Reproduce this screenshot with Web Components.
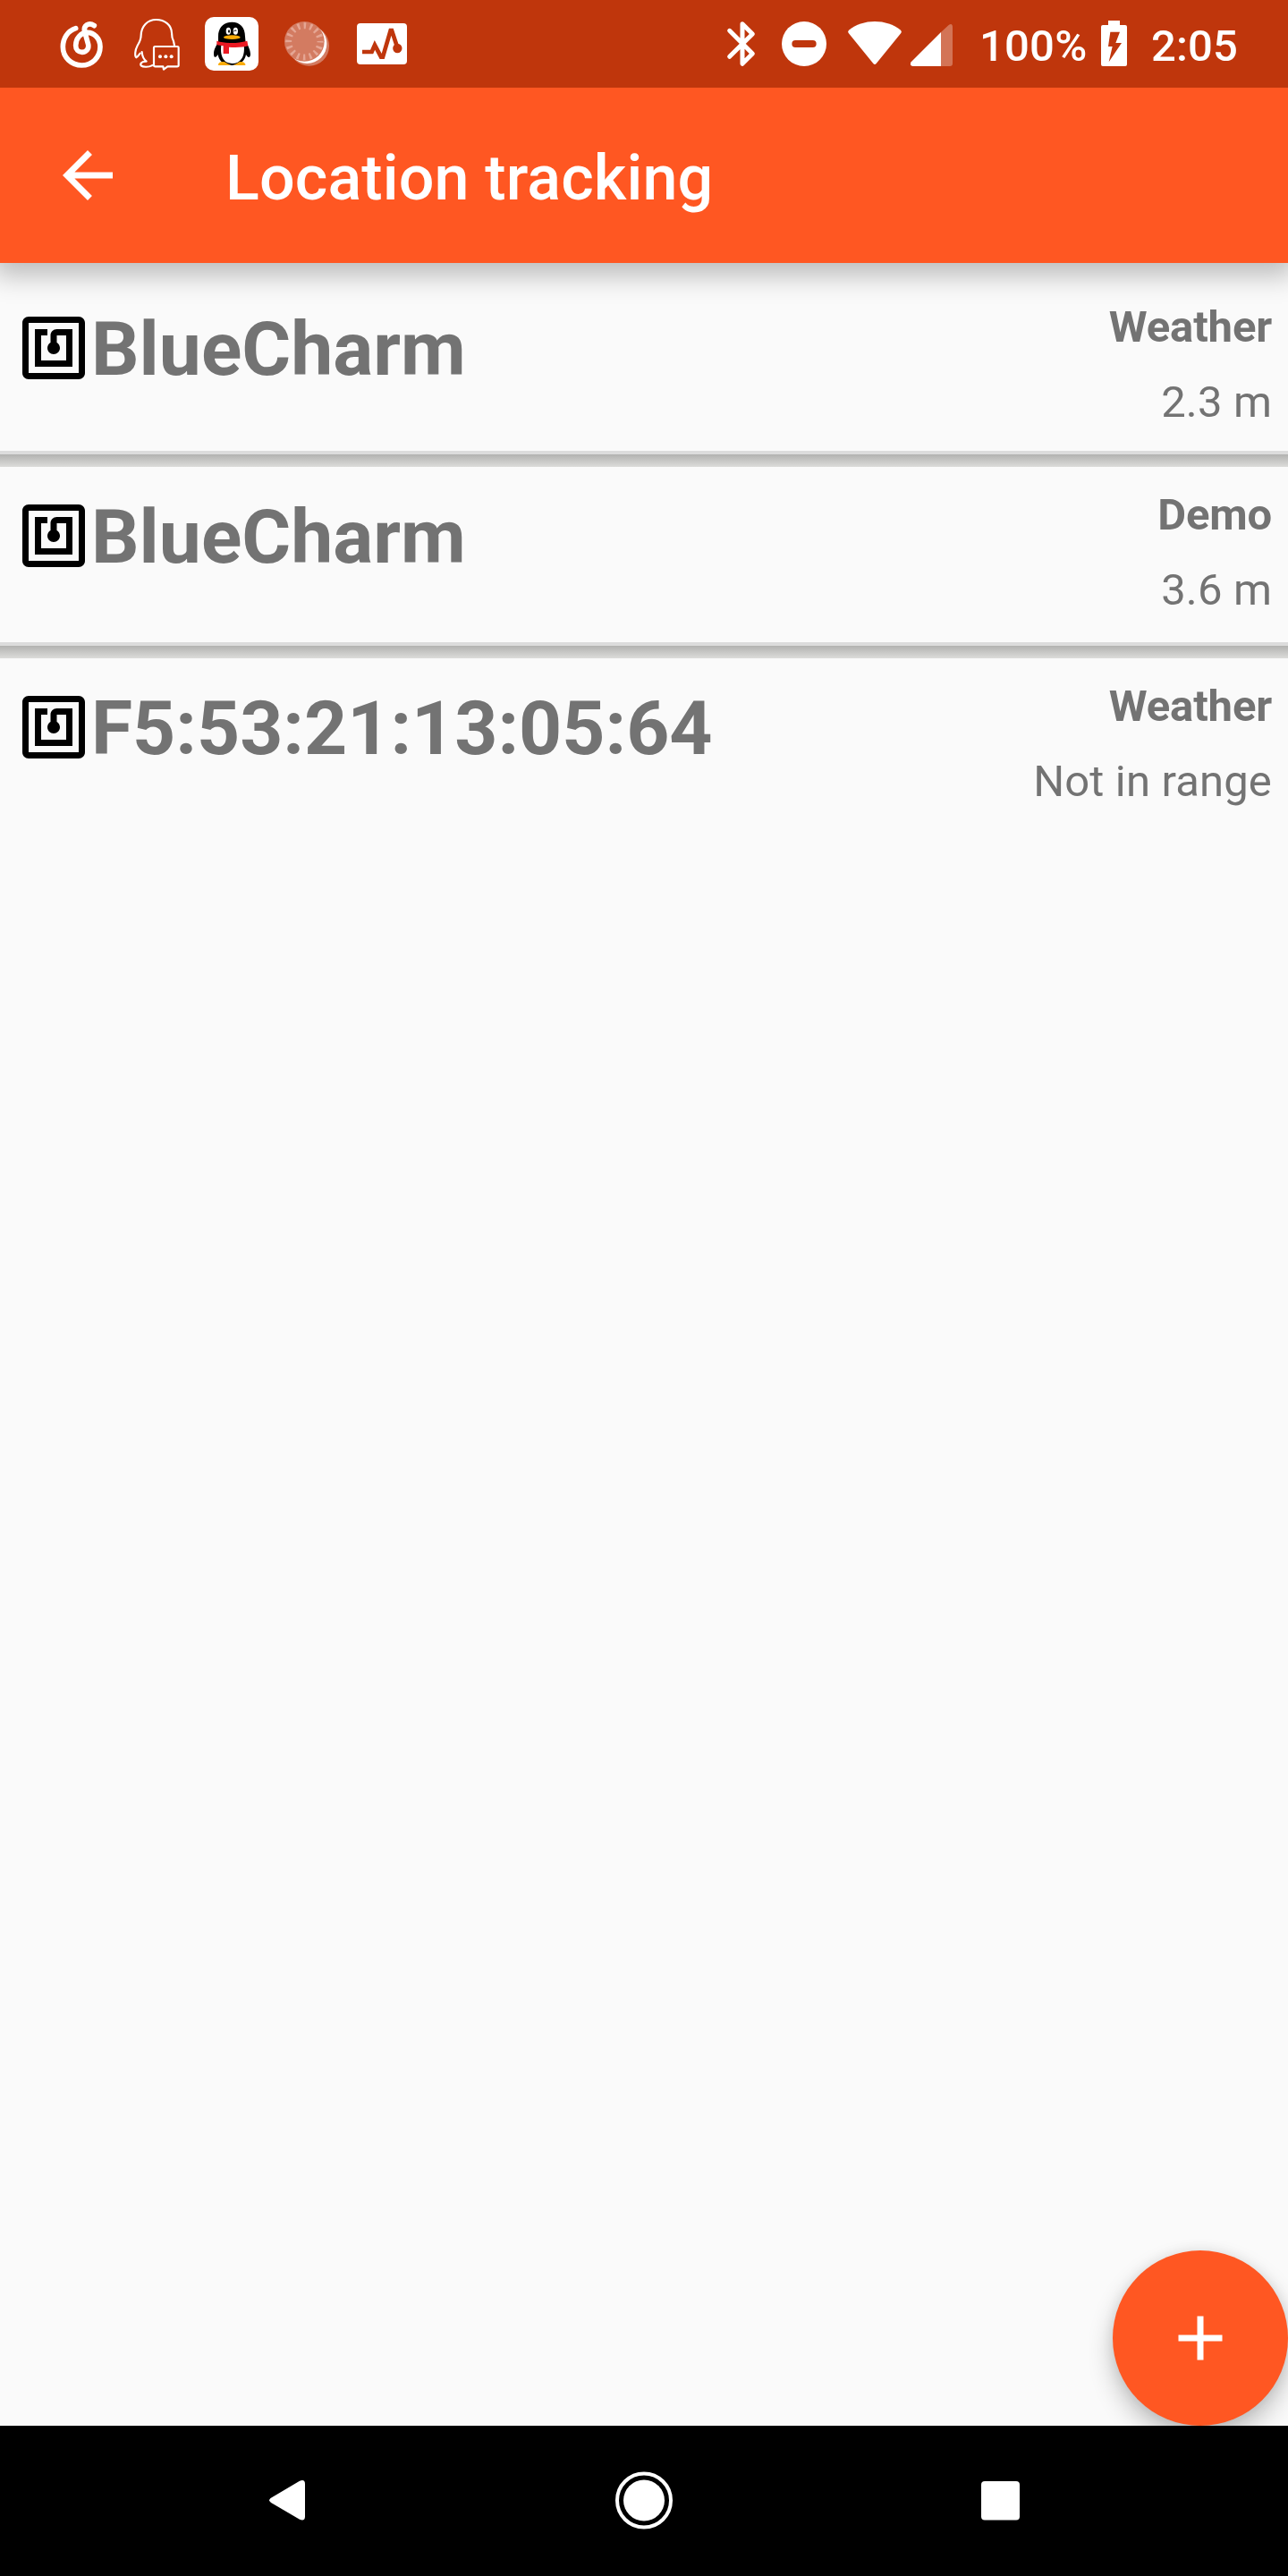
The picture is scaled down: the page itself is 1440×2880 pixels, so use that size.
<!DOCTYPE html>
<html lang="en">
<head>
<meta charset="utf-8">
<title>Location tracking</title>
<style>
html,body{margin:0;padding:0;background:#fafafa}
body{font-family:Roboto,"Liberation Sans",sans-serif}
</style>
</head>
<body>
<tracking-screen></tracking-screen>
<script>
const define = (name, html) => customElements.define(name, class extends HTMLElement {
  constructor() {
    super();
    this.attachShadow({mode: 'open'}).innerHTML = html;
  }
});

// Glyphs are drawn on a grid of three units per pixel, each in a slot of its own width.
const glyphs = {
  music: ['0 0 240 294', '<path d="M104 95C76 104 61 130 61 157C61 193 90 219 124 219S186 193 186 157C186 128 165 109 143 109C120 109 104 130 104 152C104 167 113 175 125 175C140 175 149 163 146 149L134 106C129 86 147 73 166 86" fill="none" stroke="#fff" stroke-width="17" stroke-linecap="round"/>'],
  message: ['240 0 270 294', '<path d="M435 152L432 138C428 130 426 122 426 110C425 84 403 66 374 66C344 66 324 88 323 118C323 132 318 142 311 153C303 168 301 187 307 193C312 191 316 184 320 179M326 174C327 188 332 199 341 206C326 205 319 213 323 220C330 226 350 225 359 220L365 218" fill="none" stroke="#fff" stroke-width="6.500" stroke-linejoin="round" stroke-linecap="round"/><path d="M370 156H445Q449 156 449 161V218Q449 223 444 223H412L399 233L397 223H371Q366 223 366 218V161Q366 156 370 156Z" fill="none" stroke="#fff" stroke-width="6.500" stroke-linejoin="round"/><g fill="#fff"><circle cx="387" cy="190" r="6"/><circle cx="406" cy="190" r="6"/><circle cx="425" cy="190" r="6"/></g>'],
  penguin: ['510 0 210 294', '<rect x="537" y="57" width="180" height="180" rx="30" fill="#fff"/><path d="M583 140C575 152 566 168 567 182C568 195 574 194 581 183C584 200 594 218 628 219C660 218 672 200 675 183C682 195 689 195 690 182C690 167 682 152 674 140Z" fill="#000"/><path d="M582 122C582 92 601 74 628 74S672 92 672 122L674 145H582Z" fill="#000"/><path d="M592 152H668C672 182 662 213 629 213S588 182 592 152Z" fill="#fff"/><path d="M581 217C584 208 594 205 604 208C612 214 620 216 625 219H584ZM674 217C671 208 661 205 652 208C644 214 638 216 633 219H671Z" fill="#faab07"/><path d="M577 137C594 142 612 144 628 144S661 142 679 137L682 154C668 159 638 160 618 158V180H599V154L577 151Z" fill="#eb1923"/><g fill="#fff"><ellipse cx="616" cy="104" rx="8" ry="12"/><ellipse cx="640" cy="104" rx="8" ry="12"/></g><ellipse cx="618" cy="105" rx="3" ry="5"/><path d="M634 106Q637 99 643 103" fill="none" stroke="#000" stroke-width="3"/><ellipse cx="628" cy="125" rx="28" ry="7" fill="#faab07"/>'],
  dial: ['0 0 270 294', '<circle cx="167" cy="154" r="67" fill="#d37b61"/><circle cx="160" cy="147" r="66" fill="#fff"/><circle cx="151" cy="139" r="67" fill="#d37b61"/><circle cx="151" cy="139" r="53" fill="none" stroke="#e5a694" stroke-width="21" stroke-dasharray="7.5 13.31" stroke-dashoffset="3.75"/>'],
  monitor: ['270 0 330 294', '<rect x="327" y="78" width="168" height="138" rx="12" fill="#fff"/><path d="M345 174H377L387 151L408 191H414L440 102H444L463 160" fill="none" stroke="#bf360c" stroke-width="14"/><circle cx="463" cy="162" r="15.500" fill="#bf360c"/>'],
  bluetooth: ['0 0 210 294', '<path d="M77 103L154 180L120 214V80L154 114L77 190" fill="none" stroke="#fff" stroke-width="15" stroke-linejoin="round" stroke-linecap="round"/>'],
  dnd: ['210 0 225 294', '<circle cx="327" cy="147" r="75" fill="#fff"/><path d="M298 147H356" stroke="#bf360c" stroke-width="24" stroke-linecap="round"/>'],
  wifi: ['435 0 240 294', '<path d="M477 101C500 82 532 72 564 72S628 82 651 101Q656 106 652 111L569 213Q564 219 559 213L476 111Q472 106 477 101Z" fill="#fff"/>'],
  signal: ['675 0 195 294', '<path d="M786 108L812 84Q825 76 825 92V213Q825 222 816 222H786Z" fill="#d37456"/><path d="M786 108V222H692Q679 220 686 208Z" fill="#fff"/>'],
  battery: ['0 0 87 294', '<path fill="#fff" fill-rule="evenodd" d="M24 69H63V84H81Q87 84 87 90V216Q87 222 81 222H6Q0 222 0 216V90Q0 84 6 84H24ZM31 107L24 156H38L26 208L69 144H49L63 107Z"/>']
};
customElements.define('status-glyph', class extends HTMLElement {
  constructor() {
    super();
    const [box, art] = glyphs[this.getAttribute('name')];
    const width = box.split(' ')[2] / 3;
    this.attachShadow({mode: 'open'}).innerHTML =
      `<style>:host{display:block;flex:none}svg{display:block}</style><svg width="${width}" height="98" viewBox="${box}">${art}</svg>`;
  }
});

define('status-bar', `<style>
:host{display:flex;height:98px;background:#bf360c;color:#fff;padding-left:50px;font-size:49px;font-weight:500;line-height:103px;position:relative;z-index:2}
.group{display:flex}
.right{margin-left:300px}
.level{width:136px;margin-left:15px;white-space:nowrap;letter-spacing:.2px}
.time{margin-left:27px;letter-spacing:.1px}
</style>
<div class="group"><status-glyph name="music"></status-glyph><status-glyph name="message"></status-glyph><status-glyph name="penguin"></status-glyph><status-glyph name="dial"></status-glyph><status-glyph name="monitor"></status-glyph></div>
<div class="group right"><status-glyph name="bluetooth"></status-glyph><status-glyph name="dnd"></status-glyph><status-glyph name="wifi"></status-glyph><status-glyph name="signal"></status-glyph><span class="level">100%</span><status-glyph name="battery"></status-glyph><span class="time">2:05</span></div>`);

define('app-bar', `<style>
:host{display:flex;align-items:center;height:196px;padding-left:56px;box-sizing:border-box;background:#ff5722;color:#fff;box-shadow:0 7px 28px 7px rgba(0,0,0,.25);position:relative;z-index:1}
svg{width:84px;height:84px;fill:#fff}
h1{margin:6px 0 0 112px;font-size:70px;font-weight:500;line-height:84px;letter-spacing:.13px}
</style>
<svg viewBox="0 0 24 24"><path d="M20 11H7.830l5.590-5.590L12 4l-8 8 8 8 1.410-1.410L7.830 13H20v-2z"/></svg><h1><slot></slot></h1>`);

define('beacon-row', `<style>
:host{display:flex;justify-content:space-between;height:196px;padding:0 18px;box-sizing:border-box;color:#737373}
.name{display:flex;padding-top:35px;font-size:84px;font-weight:700;line-height:88px}
svg{width:84px;height:84px;fill:#000}
.info{padding-top:12px;text-align:right;font-size:49px;line-height:84px}
.kind{font-weight:700;letter-spacing:-.15px}
.range{letter-spacing:.15px}
</style>
<div class="name"><svg viewBox="0 0 24 24"><path d="M20 2H4c-1.100 0-2 .9-2 2v16c0 1.100.9 2 2 2h16c1.100 0 2-.9 2-2V4c0-1.100-.9-2-2-2zm0 18H4V4h16v16zM18 6h-5c-1.100 0-2 .9-2 2v2.280c-.6.350-1 .98-1 1.720 0 1.100.9 2 2 2s2-.9 2-2c0-.74-.4-1.380-1-1.720V8h3v8H8V8h2V6H6v12h12V6z"/></svg><slot></slot></div>
<div class="info"><div class="kind"><slot name="kind"></slot></div><div class="range"><slot name="range"></slot></div></div>`);

define('row-divider', `<style>
:host{display:block;height:18px;background:linear-gradient(#dcdcdc 4px,#b2b2b0 4px,#dcdcda 18px)}
</style>`);

define('add-button', `<style>
:host{position:absolute;right:0;bottom:0;width:196px;height:196px;border-radius:50%;background:#ff5722;display:grid;place-items:center;box-shadow:0 14px 28px rgba(0,0,0,.24),0 0 14px rgba(0,0,0,.08)}
svg{width:84px;height:84px;fill:#fff}
</style>
<svg viewBox="0 0 24 24"><path d="M19 13h-6v6h-2v-6H5v-2h6V5h2v6h6v2z"/></svg>`);

define('nav-bar', `<style>
:host{display:flex;height:168px;background:#000;align-items:center;justify-content:space-between;padding:0 300px;box-sizing:border-box}
svg{display:block;width:42px;height:48px;fill:#fff}
.home{width:66px;height:66px}
.recent{width:43px}
</style>
<svg viewBox="0 0 42 48"><path d="M2.500 21L35 1.800Q41 -.5 41 5V41.500Q41 47 35 44.800L3 26Q-.5 23.500 2.500 21Z"/></svg>
<svg class="home" viewBox="0 0 66 66"><circle cx="33" cy="32.500" r="23"/><circle cx="33" cy="32.500" r="30" fill="none" stroke="#fff" stroke-width="4"/></svg>
<svg class="recent" viewBox="0 0 43 48"><rect y="2" width="43" height="43.500" rx="4"/></svg>`);

define('tracking-screen', `<style>
:host{display:flex;flex-direction:column;width:1440px;height:2880px;background:#fafafa}
main{flex:1;position:relative;overflow:hidden;padding-top:18px}
.first{height:192px}
</style>
<status-bar></status-bar>
<app-bar>Location tracking</app-bar>
<main>
<beacon-row class="first">BlueCharm<span slot="kind">Weather</span><span slot="range">2.3 m</span></beacon-row>
<row-divider></row-divider>
<beacon-row>BlueCharm<span slot="kind">Demo</span><span slot="range">3.6 m</span></beacon-row>
<row-divider></row-divider>
<beacon-row>F5:53:21:13:05:64<span slot="kind">Weather</span><span slot="range">Not in range</span></beacon-row>
<add-button></add-button>
</main>
<nav-bar></nav-bar>`);
</script>
</body>
</html>
